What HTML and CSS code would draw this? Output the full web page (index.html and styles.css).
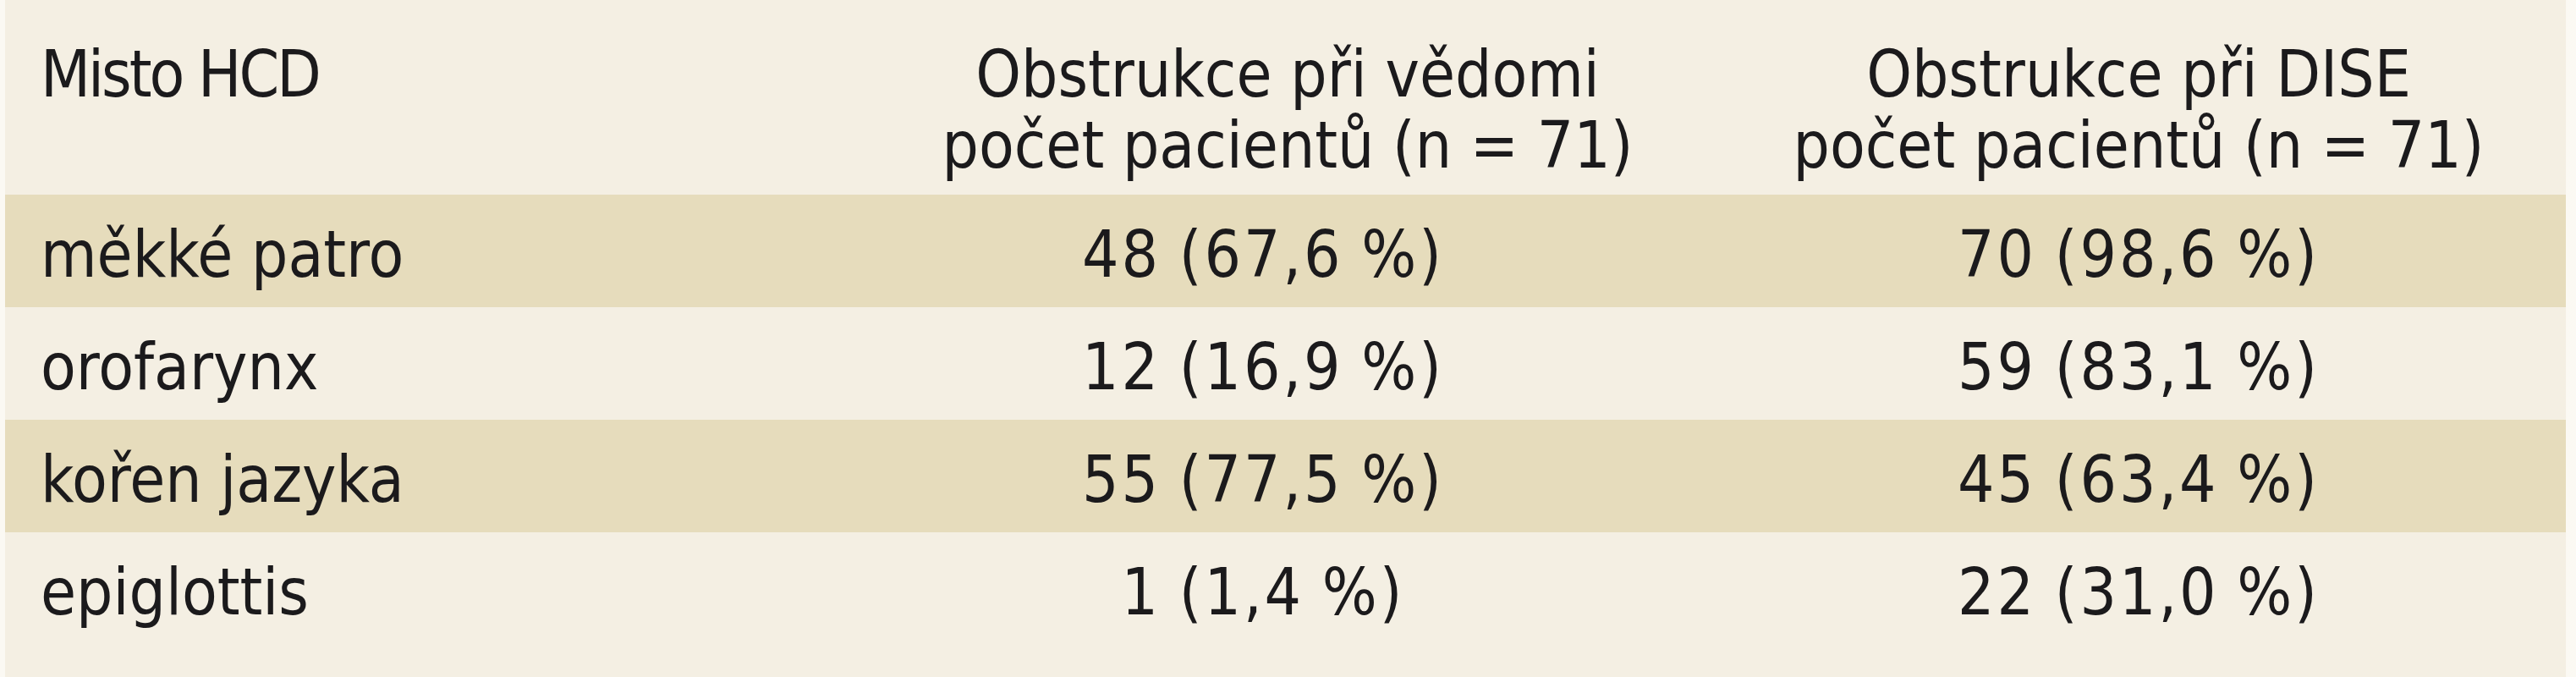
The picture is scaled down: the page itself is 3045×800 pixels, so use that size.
FILE: index.html
```html
<!DOCTYPE html>
<html lang="cs">
<head>
<meta charset="utf-8">
<title>Místo HCD</title>
<link rel="stylesheet" href="styles.css">
</head>
<body>
<table class="hcd">
  <colgroup>
    <col class="c1">
    <col class="c2">
    <col class="c3">
  </colgroup>
  <thead>
    <tr class="head">
      <th class="lbl">Misto HCD</th>
      <th class="num n2">Obstrukce při vědomi<br>počet pacientů (n = 71)</th>
      <th class="num n3">Obstrukce při DISE<br>počet pacientů (n = 71)</th>
    </tr>
  </thead>
  <tbody>
    <tr class="shade">
      <td class="lbl">měkké patro</td>
      <td class="num n2">48 (67,6 %)</td>
      <td class="num">70 (98,6 %)</td>
    </tr>
    <tr>
      <td class="lbl">orofarynx</td>
      <td class="num n2">12 (16,9 %)</td>
      <td class="num">59 (83,1 %)</td>
    </tr>
    <tr class="shade">
      <td class="lbl">kořen jazyka</td>
      <td class="num n2">55 (77,5 %)</td>
      <td class="num">45 (63,4 %)</td>
    </tr>
    <tr class="last">
      <td class="lbl">epiglottis</td>
      <td class="num n2">1 (1,4 %)</td>
      <td class="num">22 (31,0 %)</td>
    </tr>
  </tbody>
</table>
</body>
</html>
```
FILE: styles.css
```css
html, body {
  margin: 0;
  padding: 0;
  background: #fbf9f3;
}

body {
  padding-left: 6px;
  font-family: "DejaVu Sans Condensed", "DejaVu Sans", sans-serif;
  font-stretch: condensed;
  color: #1b1a1c;
}

.hcd {
  width: 3027px;
  border-collapse: collapse;
  border-spacing: 0;
  table-layout: fixed;
  background: #f4efe3;
  font-size: 76px;
}

.c1 { width: 991px; }
.c2 { width: 1026px; }
.c3 { width: 1010px; }

.hcd th,
.hcd td {
  padding: 0;
  font-weight: normal;
  white-space: nowrap;
}

.head th {
  height: 230px;
  line-height: 84px;
  vertical-align: top;
  padding-top: 46px;
  box-sizing: border-box;
}

.head th.lbl {
  letter-spacing: -3px;
}

.hcd tbody td {
  height: 133px;
  line-height: 125px;
  padding-top: 8px;
  vertical-align: top;
  box-sizing: border-box;
}

.hcd tbody td.num {
  letter-spacing: 3px;
  word-spacing: -3px;
}

.hcd tbody tr.last td {
  height: 171px;
}

.lbl {
  text-align: left;
  padding-left: 42px !important;
}

.num {
  text-align: center;
}

.head th.n2 {
  padding-left: 24px;
}

.hcd tbody td.n2 {
  padding-right: 34px;
}

.shade {
  background: #e6dcbc;
}
```
